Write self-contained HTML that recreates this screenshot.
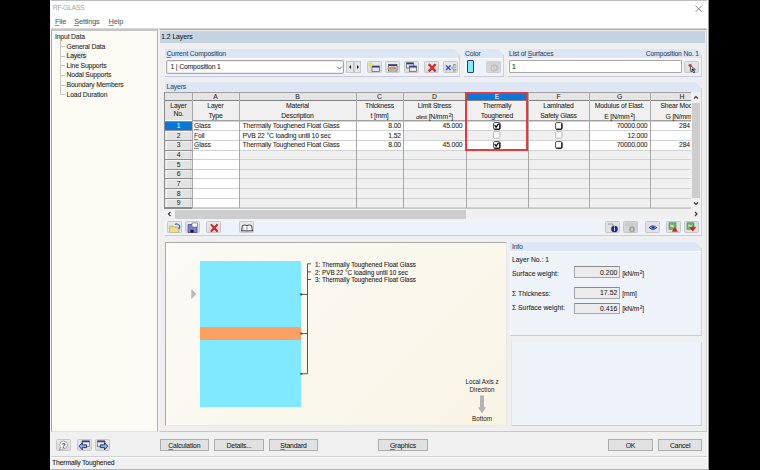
<!DOCTYPE html>
<html><head><meta charset="utf-8"><style>
html,body{margin:0;padding:0}
body{width:760px;height:470px;background:#000;position:relative;overflow:hidden;font-family:"Liberation Sans",sans-serif}
.a{position:absolute}
.t{position:absolute;white-space:nowrap;line-height:1;-webkit-text-stroke:0.07px currentColor}
u{text-decoration:underline;text-underline-offset:0.6px;text-decoration-thickness:0.6px;text-decoration-color:rgba(40,40,40,0.55)}
</style></head><body>
<div class="a" style="left:50px;top:0px;width:659px;height:470px;background:#f0f0f0;"></div>
<div class="a" style="left:50px;top:0px;width:659px;height:1px;background:#bdbdbd;"></div>
<div class="a" style="left:50px;top:0px;width:1px;height:470px;background:#f4f4f4;"></div>
<div class="a" style="left:708px;top:0px;width:1px;height:470px;background:#9a9a9a;"></div>
<div class="a" style="left:51px;top:1px;width:657px;height:28px;background:#ffffff;"></div>
<div class="t" style="left:52.8px;top:5.00px;font-size:7.1px;color:#a4a4a4;letter-spacing:-0.500px;-webkit-text-stroke:0;">RF-GLASS</div>
<svg class="a" style="left:695px;top:5px" width="8" height="8"><path d="M0.5 0.5L7 7M7 0.5L0.5 7" stroke="#6a6a6a" stroke-width="0.8"/></svg>
<div class="t" style="left:55px;top:18.00px;font-size:7.4px;color:#505050;letter-spacing:-0.170px;-webkit-text-stroke:0.03px currentColor;"><u>F</u>ile</div>
<div class="t" style="left:74.3px;top:18.00px;font-size:7.4px;color:#505050;letter-spacing:-0.170px;-webkit-text-stroke:0.03px currentColor;"><u>S</u>ettings</div>
<div class="t" style="left:108.6px;top:18.00px;font-size:7.4px;color:#505050;letter-spacing:-0.170px;-webkit-text-stroke:0.03px currentColor;"><u>H</u>elp</div>
<div class="a" style="left:51px;top:28px;width:657px;height:1px;background:#d9d9d9;"></div>
<div class="a" style="left:51px;top:29px;width:107px;height:403px;background:#fbfbf3;border-top:2px solid #c4c4c4;border-left:1px solid #a6a6a6;border-right:1px solid #b4b4b4;border-bottom:1px solid #e3e3e3;box-sizing:border-box;"></div>
<div class="t" style="left:55px;top:34.00px;font-size:6.8px;color:#1e1e1e;letter-spacing:-0.150px;">Input Data</div>
<div class="a" style="left:60px;top:41px;width:1px;height:53.5px;background:#c8c8c8;"></div>
<div class="a" style="left:60px;top:46px;width:5px;height:1px;background:#c8c8c8;"></div>
<div class="t" style="left:66.6px;top:44.00px;font-size:6.8px;color:#1e1e1e;letter-spacing:-0.150px;">General Data</div>
<div class="a" style="left:60px;top:56px;width:5px;height:1px;background:#c8c8c8;"></div>
<div class="a" style="left:65.5px;top:51.25px;width:21px;height:9px;background:#ececec;"></div>
<div class="t" style="left:66.6px;top:53.00px;font-size:6.8px;color:#1e1e1e;letter-spacing:-0.150px;">Layers</div>
<div class="a" style="left:60px;top:65px;width:5px;height:1px;background:#c8c8c8;"></div>
<div class="t" style="left:66.6px;top:63.00px;font-size:6.8px;color:#1e1e1e;letter-spacing:-0.150px;">Line Supports</div>
<div class="a" style="left:60px;top:75px;width:5px;height:1px;background:#c8c8c8;"></div>
<div class="t" style="left:66.6px;top:72.00px;font-size:6.8px;color:#1e1e1e;letter-spacing:-0.150px;">Nodal Supports</div>
<div class="a" style="left:60px;top:85px;width:5px;height:1px;background:#c8c8c8;"></div>
<div class="t" style="left:66.6px;top:82.00px;font-size:6.8px;color:#1e1e1e;letter-spacing:-0.150px;">Boundary Members</div>
<div class="a" style="left:60px;top:94px;width:5px;height:1px;background:#c8c8c8;"></div>
<div class="t" style="left:66.6px;top:92.00px;font-size:6.8px;color:#1e1e1e;letter-spacing:-0.150px;">Load Duration</div>
<div class="a" style="left:159px;top:29px;width:548px;height:403px;background:#efefef;border-top:1px solid #a8a8a8;border-left:1px solid #f4f4f4;border-right:1px solid #d4d4d4;border-bottom:1px solid #c8c8c8;box-sizing:border-box;"></div>
<div class="a" style="left:707px;top:0px;width:1px;height:470px;background:#fafafa;"></div>
<div class="a" style="left:160px;top:30.5px;width:545px;height:12px;background:#c5d3e1;"></div>
<div class="t" style="left:161.3px;top:34.00px;font-size:6.9px;color:#1a1a2a;letter-spacing:-0.100px;">1.2 Layers</div>
<svg class="a" style="left:165px;top:48.6px" width="295" height="9.2"><path d="M0 0H289L295 6V9.2H0Z" fill="#dce6f4"/></svg>
<div class="a" style="left:165px;top:57.8px;width:295px;height:18.8px;background:#eef2f9;"></div>
<div class="a" style="left:165px;top:57.8px;width:294px;height:1px;background:#f8faff;"></div>
<div class="a" style="left:165px;top:57.8px;width:1px;height:18.8px;background:#f6f8fc;"></div>
<div class="a" style="left:459px;top:54.6px;width:1px;height:22px;background:#cfcff5;"></div>
<div class="a" style="left:165px;top:75.6px;width:295px;height:1.2px;background:#c8c8f2;"></div>
<div class="t" style="left:166.5px;top:51.00px;font-size:6.8px;color:#2f4a6d;letter-spacing:-0.150px;"><u>C</u>urrent Composition</div>
<svg class="a" style="left:463.5px;top:48.6px" width="40.5" height="9.2"><path d="M0 0H34.5L40.5 6V9.2H0Z" fill="#dce6f4"/></svg>
<div class="a" style="left:463.5px;top:57.8px;width:40.5px;height:18.8px;background:#eef2f9;"></div>
<div class="a" style="left:463.5px;top:57.8px;width:39.5px;height:1px;background:#f8faff;"></div>
<div class="a" style="left:463.5px;top:57.8px;width:1px;height:18.8px;background:#f6f8fc;"></div>
<div class="a" style="left:503.0px;top:54.6px;width:1px;height:22px;background:#cfcff5;"></div>
<div class="a" style="left:463.5px;top:75.6px;width:40.5px;height:1.2px;background:#c8c8f2;"></div>
<div class="t" style="left:465.0px;top:51.00px;font-size:6.8px;color:#2f4a6d;letter-spacing:-0.150px;">Color</div>
<svg class="a" style="left:507.5px;top:48.6px" width="194" height="9.2"><path d="M0 0H188L194 6V9.2H0Z" fill="#dce6f4"/></svg>
<div class="a" style="left:507.5px;top:57.8px;width:194px;height:18.8px;background:#eef2f9;"></div>
<div class="a" style="left:507.5px;top:57.8px;width:193px;height:1px;background:#f8faff;"></div>
<div class="a" style="left:507.5px;top:57.8px;width:1px;height:18.8px;background:#f6f8fc;"></div>
<div class="a" style="left:700.5px;top:54.6px;width:1px;height:22px;background:#cfcff5;"></div>
<div class="a" style="left:507.5px;top:75.6px;width:194px;height:1.2px;background:#c8c8f2;"></div>
<div class="t" style="left:509.0px;top:51.00px;font-size:6.8px;color:#2f4a6d;letter-spacing:-0.150px;">List of <u>S</u>urfaces</div>
<div class="t" style="right:61px;top:51.00px;font-size:6.8px;color:#2f4a6d;letter-spacing:-0.150px;">Composition No. 1</div>
<div class="a" style="left:166px;top:60px;width:178.2px;height:13.5px;background:#fff;border:1px solid #a8a8a8;border-radius:2px;box-sizing:border-box;box-shadow:inset 0 0 0 0.5px #d8d8d8;"></div>
<div class="t" style="left:170.5px;top:64.00px;font-size:6.8px;color:#1e1e1e;letter-spacing:-0.150px;">1 | Composition 1</div>
<svg class="a" style="left:335.5px;top:64.5px" width="8" height="6"><path d="M0.9 1.6L3.4 4.1L5.9 1.6" stroke="#555" stroke-width="0.9" fill="none"/></svg>
<div class="a" style="left:346px;top:61px;width:7.5px;height:12px;background:#e6e6e6;border:1px solid #c8c8c8;box-sizing:border-box;"></div>
<div class="a" style="left:353.5px;top:61px;width:7.5px;height:12px;background:#e6e6e6;border:1px solid #c8c8c8;box-sizing:border-box;"></div>
<svg class="a" style="left:346px;top:61px" width="15" height="12"><path d="M5 4L3 6L5 8Z" fill="#202020"/><path d="M11 4L13 6L11 8Z" fill="#202020"/></svg>
<div class="a" style="left:367.2px;top:61px;width:15px;height:12px;background:linear-gradient(#e9e9e9,#dadada);border:1px solid #c8c8c8;border-radius:1.5px;box-sizing:border-box;"><svg width="15" height="12" style="position:absolute;left:0;top:0"><rect x="4" y="4" width="7.5" height="5.5" fill="#e6e6e6" stroke="#5a5a5a" stroke-width="0.7"/><rect x="4" y="4" width="7.5" height="1.5" fill="#2a3a90"/><circle cx="2.6" cy="2.8" r="2" fill="#ecec50" stroke="#c8c030" stroke-width="0.4"/></svg></div>
<div class="a" style="left:385.3px;top:61px;width:15px;height:12px;background:linear-gradient(#e9e9e9,#dadada);border:1px solid #c8c8c8;border-radius:1.5px;box-sizing:border-box;"><svg width="15" height="12" style="position:absolute;left:0;top:0"><rect x="2.5" y="2.5" width="8.5" height="6.5" fill="#e6e6e6" stroke="#5a5a5a" stroke-width="0.7"/><rect x="2.5" y="2.5" width="8.5" height="1.5" fill="#2a3a90"/><path d="M1 6.2Q4 3.8 8 4.6L11.5 5.5L11 7.5L7 7.8L4 8Z" fill="#c89a78"/><path d="M10.5 5L12.5 4.5V6.5Z" fill="#80c0e0"/></svg></div>
<div class="a" style="left:404px;top:61px;width:15px;height:12px;background:linear-gradient(#e9e9e9,#dadada);border:1px solid #c8c8c8;border-radius:1.5px;box-sizing:border-box;"><svg width="15" height="12" style="position:absolute;left:0;top:0"><rect x="1.5" y="0.8" width="7" height="5.2" fill="#e6e6e6" stroke="#5a5a5a" stroke-width="0.7"/><rect x="1.5" y="0.8" width="7" height="1.5" fill="#2a3a90"/><rect x="4.5" y="4" width="7" height="5.5" fill="#e6e6e6" stroke="#5a5a5a" stroke-width="0.7"/><rect x="4.5" y="4" width="7" height="1.5" fill="#2a3a90"/></svg></div>
<div class="a" style="left:424.4px;top:61px;width:15px;height:12px;background:linear-gradient(#e9e9e9,#dadada);border:1px solid #c8c8c8;border-radius:1.5px;box-sizing:border-box;"><svg width="15" height="12" style="position:absolute;left:0;top:0"><path d="M3.8 2.2L10.5 9.3M10.5 2.2L3.8 9.3" stroke="#b81818" stroke-width="2.3"/><path d="M3.8 2.2L10.5 9.3M10.5 2.2L3.8 9.3" stroke="#e83030" stroke-width="1.2"/></svg></div>
<div class="a" style="left:442.6px;top:61px;width:15px;height:12px;background:linear-gradient(#e9e9e9,#dadada);border:1px solid #c8c8c8;border-radius:1.5px;box-sizing:border-box;"><svg width="15" height="12" style="position:absolute;left:0;top:0"><path d="M2 3.5L6.5 8M6.5 3.5L2 8" stroke="#3050d0" stroke-width="1.4"/><path d="M7.5 5.8L10.5 2.5M7.5 5.8L10.5 9M8 5.8H12M9 4H12.5M9 7.5H12.5M9 2.5H12M9 9H12" stroke="#808080" stroke-width="0.6"/></svg></div>
<div class="a" style="left:466.8px;top:60.4px;width:7px;height:12.2px;background:#80eaff;border:1px solid #304050;border-radius:1px;box-sizing:border-box;"></div>
<div class="a" style="left:486.1px;top:60.6px;width:15.2px;height:12.4px;background:#d4d4d4;border:1px solid #d0d0d0;border-radius:1.5px;box-sizing:border-box;"><svg width="15" height="12" style="position:absolute;left:0;top:0"><circle cx="7" cy="6" r="3.2" fill="none" stroke="#b4b4b4" stroke-width="0.8"/><circle cx="8.5" cy="5.5" r="2.2" fill="none" stroke="#b4b4b4" stroke-width="0.6"/></svg></div>
<div class="a" style="left:509px;top:60.4px;width:173px;height:12.6px;background:#fff;border:1px solid #a8a8a8;border-radius:1px;box-sizing:border-box;"></div>
<div class="t" style="left:512px;top:64.00px;font-size:6.8px;color:#1e1e1e;letter-spacing:-0.150px;">1</div>
<div class="a" style="left:684px;top:60.7px;width:15px;height:12.4px;background:linear-gradient(#e9e9e9,#dadada);border:1px solid #c8c8c8;border-radius:1.5px;box-sizing:border-box;"><svg width="15" height="12" style="position:absolute;left:0;top:0"><path d="M5.2 3.2L10.3 7.6L8.4 8L9.8 10.3L8.7 10.9L7.4 8.6L6 9.9Z" fill="#fafafa" stroke="#101010" stroke-width="0.7"/><circle cx="7.6" cy="7.6" r="1" fill="#101010"/><path d="M3.5 1.2L5 2.6L6.8 1.4L6.2 3.3L7.4 4.2L5.4 4.1L4.6 5.6L4.2 3.8L2.6 3.2L4.1 2.6Z" fill="#e02828"/></svg></div>
<svg class="a" style="left:165px;top:81.8px" width="536.5" height="10.5"><path d="M0 0H530.5L536.5 6V10.5H0Z" fill="#dce6f4"/></svg>
<div class="a" style="left:165px;top:92.3px;width:536.5px;height:143.5px;background:#eef2f9;"></div>
<div class="a" style="left:165px;top:92.3px;width:535.5px;height:1px;background:#f8faff;"></div>
<div class="a" style="left:165px;top:92.3px;width:1px;height:143.5px;background:#f6f8fc;"></div>
<div class="a" style="left:700.5px;top:87.8px;width:1px;height:148px;background:#cfcff5;"></div>
<div class="a" style="left:165px;top:234.8px;width:536.5px;height:1.2px;background:#c8c8f2;"></div>
<div class="t" style="left:166.5px;top:84.00px;font-size:6.8px;color:#2f4a6d;letter-spacing:-0.150px;">Layers</div>
<div class="a" style="left:165px;top:92.4px;width:526px;height:115.5px;background:#ffffff;"></div>
<div class="a" style="left:165px;top:92.4px;width:526px;height:8px;background:#e4e4e4;"></div>
<div class="a" style="left:165px;top:100.4px;width:526px;height:20.1px;background:#f0f0f0;"></div>
<div class="a" style="left:165px;top:92.4px;width:27px;height:28.1px;background:#e4e4e4;"></div>
<div class="a" style="left:192px;top:120.6px;width:47px;height:9.65px;background:#ffffff;"></div>
<div class="a" style="left:239px;top:120.6px;width:117px;height:9.65px;background:#ffffff;"></div>
<div class="a" style="left:356px;top:120.6px;width:47px;height:9.65px;background:#ffffff;"></div>
<div class="a" style="left:403px;top:120.6px;width:63px;height:9.65px;background:#ffffff;"></div>
<div class="a" style="left:466px;top:120.6px;width:62px;height:9.65px;background:#ffffff;"></div>
<div class="a" style="left:528px;top:120.6px;width:61px;height:9.65px;background:#ffffff;"></div>
<div class="a" style="left:589px;top:120.6px;width:61px;height:9.65px;background:#ffffff;"></div>
<div class="a" style="left:650px;top:120.6px;width:41px;height:9.65px;background:#ffffff;"></div>
<div class="a" style="left:165px;top:120.6px;width:27px;height:9.65px;background:#0a78d7;"></div>
<div class="t" style="left:78.5px;width:200px;text-align:center;top:123.00px;font-size:6.8px;color:#ffffff;letter-spacing:-0.150px;-webkit-text-stroke:0;">1</div>
<div class="a" style="left:192px;top:130.25px;width:47px;height:9.65px;background:#ffffff;"></div>
<div class="a" style="left:239px;top:130.25px;width:117px;height:9.65px;background:#ffffff;"></div>
<div class="a" style="left:356px;top:130.25px;width:47px;height:9.65px;background:#ffffff;"></div>
<div class="a" style="left:403px;top:130.25px;width:63px;height:9.65px;background:#f0f0f0;"></div>
<div class="a" style="left:466px;top:130.25px;width:62px;height:9.65px;background:#f0f0f0;"></div>
<div class="a" style="left:528px;top:130.25px;width:61px;height:9.65px;background:#f0f0f0;"></div>
<div class="a" style="left:589px;top:130.25px;width:61px;height:9.65px;background:#ffffff;"></div>
<div class="a" style="left:650px;top:130.25px;width:41px;height:9.65px;background:#ffffff;"></div>
<div class="a" style="left:165px;top:130.25px;width:27px;height:9.65px;background:#e3e3e3;"></div>
<div class="a" style="left:166px;top:131px;width:25px;height:1px;background:#f4f4f4;"></div>
<div class="a" style="left:166px;top:131px;width:1px;height:8.65px;background:#f4f4f4;"></div>
<div class="a" style="left:190px;top:131px;width:1px;height:8.65px;background:#d4d4d4;"></div>
<div class="t" style="left:78.5px;width:200px;text-align:center;top:133.00px;font-size:6.8px;color:#1e1e1e;letter-spacing:-0.150px;-webkit-text-stroke:0.03px currentColor;">2</div>
<div class="a" style="left:192px;top:139.9px;width:47px;height:9.65px;background:#ffffff;"></div>
<div class="a" style="left:239px;top:139.9px;width:117px;height:9.65px;background:#ffffff;"></div>
<div class="a" style="left:356px;top:139.9px;width:47px;height:9.65px;background:#ffffff;"></div>
<div class="a" style="left:403px;top:139.9px;width:63px;height:9.65px;background:#ffffff;"></div>
<div class="a" style="left:466px;top:139.9px;width:62px;height:9.65px;background:#ffffff;"></div>
<div class="a" style="left:528px;top:139.9px;width:61px;height:9.65px;background:#ffffff;"></div>
<div class="a" style="left:589px;top:139.9px;width:61px;height:9.65px;background:#ffffff;"></div>
<div class="a" style="left:650px;top:139.9px;width:41px;height:9.65px;background:#ffffff;"></div>
<div class="a" style="left:165px;top:139.9px;width:27px;height:9.65px;background:#e3e3e3;"></div>
<div class="a" style="left:166px;top:141px;width:25px;height:1px;background:#f4f4f4;"></div>
<div class="a" style="left:166px;top:141px;width:1px;height:8.65px;background:#f4f4f4;"></div>
<div class="a" style="left:190px;top:141px;width:1px;height:8.65px;background:#d4d4d4;"></div>
<div class="t" style="left:78.5px;width:200px;text-align:center;top:142.00px;font-size:6.8px;color:#1e1e1e;letter-spacing:-0.150px;-webkit-text-stroke:0.03px currentColor;">3</div>
<div class="a" style="left:192px;top:149.55px;width:47px;height:9.65px;background:#ffffff;"></div>
<div class="a" style="left:239px;top:149.55px;width:117px;height:9.65px;background:#f0f0f0;"></div>
<div class="a" style="left:356px;top:149.55px;width:47px;height:9.65px;background:#f0f0f0;"></div>
<div class="a" style="left:403px;top:149.55px;width:63px;height:9.65px;background:#f0f0f0;"></div>
<div class="a" style="left:466px;top:149.55px;width:62px;height:9.65px;background:#f0f0f0;"></div>
<div class="a" style="left:528px;top:149.55px;width:61px;height:9.65px;background:#f0f0f0;"></div>
<div class="a" style="left:589px;top:149.55px;width:61px;height:9.65px;background:#f0f0f0;"></div>
<div class="a" style="left:650px;top:149.55px;width:41px;height:9.65px;background:#f0f0f0;"></div>
<div class="a" style="left:165px;top:149.55px;width:27px;height:9.65px;background:#e3e3e3;"></div>
<div class="a" style="left:166px;top:151px;width:25px;height:1px;background:#f4f4f4;"></div>
<div class="a" style="left:166px;top:151px;width:1px;height:8.65px;background:#f4f4f4;"></div>
<div class="a" style="left:190px;top:151px;width:1px;height:8.65px;background:#d4d4d4;"></div>
<div class="t" style="left:78.5px;width:200px;text-align:center;top:152.00px;font-size:6.8px;color:#1e1e1e;letter-spacing:-0.150px;-webkit-text-stroke:0.03px currentColor;">4</div>
<div class="a" style="left:192px;top:159.2px;width:47px;height:9.65px;background:#ffffff;"></div>
<div class="a" style="left:239px;top:159.2px;width:117px;height:9.65px;background:#f0f0f0;"></div>
<div class="a" style="left:356px;top:159.2px;width:47px;height:9.65px;background:#f0f0f0;"></div>
<div class="a" style="left:403px;top:159.2px;width:63px;height:9.65px;background:#f0f0f0;"></div>
<div class="a" style="left:466px;top:159.2px;width:62px;height:9.65px;background:#f0f0f0;"></div>
<div class="a" style="left:528px;top:159.2px;width:61px;height:9.65px;background:#f0f0f0;"></div>
<div class="a" style="left:589px;top:159.2px;width:61px;height:9.65px;background:#f0f0f0;"></div>
<div class="a" style="left:650px;top:159.2px;width:41px;height:9.65px;background:#f0f0f0;"></div>
<div class="a" style="left:165px;top:159.2px;width:27px;height:9.65px;background:#e3e3e3;"></div>
<div class="a" style="left:166px;top:160px;width:25px;height:1px;background:#f4f4f4;"></div>
<div class="a" style="left:166px;top:160px;width:1px;height:8.65px;background:#f4f4f4;"></div>
<div class="a" style="left:190px;top:160px;width:1px;height:8.65px;background:#d4d4d4;"></div>
<div class="t" style="left:78.5px;width:200px;text-align:center;top:162.00px;font-size:6.8px;color:#1e1e1e;letter-spacing:-0.150px;-webkit-text-stroke:0.03px currentColor;">5</div>
<div class="a" style="left:192px;top:168.85px;width:47px;height:9.65px;background:#ffffff;"></div>
<div class="a" style="left:239px;top:168.85px;width:117px;height:9.65px;background:#f0f0f0;"></div>
<div class="a" style="left:356px;top:168.85px;width:47px;height:9.65px;background:#f0f0f0;"></div>
<div class="a" style="left:403px;top:168.85px;width:63px;height:9.65px;background:#f0f0f0;"></div>
<div class="a" style="left:466px;top:168.85px;width:62px;height:9.65px;background:#f0f0f0;"></div>
<div class="a" style="left:528px;top:168.85px;width:61px;height:9.65px;background:#f0f0f0;"></div>
<div class="a" style="left:589px;top:168.85px;width:61px;height:9.65px;background:#f0f0f0;"></div>
<div class="a" style="left:650px;top:168.85px;width:41px;height:9.65px;background:#f0f0f0;"></div>
<div class="a" style="left:165px;top:168.85px;width:27px;height:9.65px;background:#e3e3e3;"></div>
<div class="a" style="left:166px;top:170px;width:25px;height:1px;background:#f4f4f4;"></div>
<div class="a" style="left:166px;top:170px;width:1px;height:8.65px;background:#f4f4f4;"></div>
<div class="a" style="left:190px;top:170px;width:1px;height:8.65px;background:#d4d4d4;"></div>
<div class="t" style="left:78.5px;width:200px;text-align:center;top:171.00px;font-size:6.8px;color:#1e1e1e;letter-spacing:-0.150px;-webkit-text-stroke:0.03px currentColor;">6</div>
<div class="a" style="left:192px;top:178.5px;width:47px;height:9.65px;background:#ffffff;"></div>
<div class="a" style="left:239px;top:178.5px;width:117px;height:9.65px;background:#f0f0f0;"></div>
<div class="a" style="left:356px;top:178.5px;width:47px;height:9.65px;background:#f0f0f0;"></div>
<div class="a" style="left:403px;top:178.5px;width:63px;height:9.65px;background:#f0f0f0;"></div>
<div class="a" style="left:466px;top:178.5px;width:62px;height:9.65px;background:#f0f0f0;"></div>
<div class="a" style="left:528px;top:178.5px;width:61px;height:9.65px;background:#f0f0f0;"></div>
<div class="a" style="left:589px;top:178.5px;width:61px;height:9.65px;background:#f0f0f0;"></div>
<div class="a" style="left:650px;top:178.5px;width:41px;height:9.65px;background:#f0f0f0;"></div>
<div class="a" style="left:165px;top:178.5px;width:27px;height:9.65px;background:#e3e3e3;"></div>
<div class="a" style="left:166px;top:179px;width:25px;height:1px;background:#f4f4f4;"></div>
<div class="a" style="left:166px;top:179px;width:1px;height:8.65px;background:#f4f4f4;"></div>
<div class="a" style="left:190px;top:179px;width:1px;height:8.65px;background:#d4d4d4;"></div>
<div class="t" style="left:78.5px;width:200px;text-align:center;top:181.00px;font-size:6.8px;color:#1e1e1e;letter-spacing:-0.150px;-webkit-text-stroke:0.03px currentColor;">7</div>
<div class="a" style="left:192px;top:188.14999999999998px;width:47px;height:9.65px;background:#ffffff;"></div>
<div class="a" style="left:239px;top:188.14999999999998px;width:117px;height:9.65px;background:#f0f0f0;"></div>
<div class="a" style="left:356px;top:188.14999999999998px;width:47px;height:9.65px;background:#f0f0f0;"></div>
<div class="a" style="left:403px;top:188.14999999999998px;width:63px;height:9.65px;background:#f0f0f0;"></div>
<div class="a" style="left:466px;top:188.14999999999998px;width:62px;height:9.65px;background:#f0f0f0;"></div>
<div class="a" style="left:528px;top:188.14999999999998px;width:61px;height:9.65px;background:#f0f0f0;"></div>
<div class="a" style="left:589px;top:188.14999999999998px;width:61px;height:9.65px;background:#f0f0f0;"></div>
<div class="a" style="left:650px;top:188.14999999999998px;width:41px;height:9.65px;background:#f0f0f0;"></div>
<div class="a" style="left:165px;top:188.14999999999998px;width:27px;height:9.65px;background:#e3e3e3;"></div>
<div class="a" style="left:166px;top:189px;width:25px;height:1px;background:#f4f4f4;"></div>
<div class="a" style="left:166px;top:189px;width:1px;height:8.65px;background:#f4f4f4;"></div>
<div class="a" style="left:190px;top:189px;width:1px;height:8.65px;background:#d4d4d4;"></div>
<div class="t" style="left:78.5px;width:200px;text-align:center;top:191.00px;font-size:6.8px;color:#1e1e1e;letter-spacing:-0.150px;-webkit-text-stroke:0.03px currentColor;">8</div>
<div class="a" style="left:192px;top:197.8px;width:47px;height:9.65px;background:#ffffff;"></div>
<div class="a" style="left:239px;top:197.8px;width:117px;height:9.65px;background:#f0f0f0;"></div>
<div class="a" style="left:356px;top:197.8px;width:47px;height:9.65px;background:#f0f0f0;"></div>
<div class="a" style="left:403px;top:197.8px;width:63px;height:9.65px;background:#f0f0f0;"></div>
<div class="a" style="left:466px;top:197.8px;width:62px;height:9.65px;background:#f0f0f0;"></div>
<div class="a" style="left:528px;top:197.8px;width:61px;height:9.65px;background:#f0f0f0;"></div>
<div class="a" style="left:589px;top:197.8px;width:61px;height:9.65px;background:#f0f0f0;"></div>
<div class="a" style="left:650px;top:197.8px;width:41px;height:9.65px;background:#f0f0f0;"></div>
<div class="a" style="left:165px;top:197.8px;width:27px;height:9.65px;background:#e3e3e3;"></div>
<div class="a" style="left:166px;top:199px;width:25px;height:1px;background:#f4f4f4;"></div>
<div class="a" style="left:166px;top:199px;width:1px;height:8.65px;background:#f4f4f4;"></div>
<div class="a" style="left:190px;top:199px;width:1px;height:8.65px;background:#d4d4d4;"></div>
<div class="t" style="left:78.5px;width:200px;text-align:center;top:200.00px;font-size:6.8px;color:#1e1e1e;letter-spacing:-0.150px;-webkit-text-stroke:0.03px currentColor;">9</div>
<div class="a" style="left:192px;top:121px;width:499px;height:1px;background:#d2d2d2;"></div>
<div class="a" style="left:165px;top:121px;width:27px;height:1px;background:#8f8f8f;"></div>
<div class="a" style="left:192px;top:130px;width:499px;height:1px;background:#d2d2d2;"></div>
<div class="a" style="left:165px;top:130px;width:27px;height:1px;background:#8f8f8f;"></div>
<div class="a" style="left:192px;top:140px;width:499px;height:1px;background:#d2d2d2;"></div>
<div class="a" style="left:165px;top:140px;width:27px;height:1px;background:#8f8f8f;"></div>
<div class="a" style="left:192px;top:150px;width:499px;height:1px;background:#d2d2d2;"></div>
<div class="a" style="left:165px;top:150px;width:27px;height:1px;background:#8f8f8f;"></div>
<div class="a" style="left:192px;top:159px;width:499px;height:1px;background:#d2d2d2;"></div>
<div class="a" style="left:165px;top:159px;width:27px;height:1px;background:#8f8f8f;"></div>
<div class="a" style="left:192px;top:169px;width:499px;height:1px;background:#d2d2d2;"></div>
<div class="a" style="left:165px;top:169px;width:27px;height:1px;background:#8f8f8f;"></div>
<div class="a" style="left:192px;top:178px;width:499px;height:1px;background:#d2d2d2;"></div>
<div class="a" style="left:165px;top:178px;width:27px;height:1px;background:#8f8f8f;"></div>
<div class="a" style="left:192px;top:188px;width:499px;height:1px;background:#d2d2d2;"></div>
<div class="a" style="left:165px;top:188px;width:27px;height:1px;background:#8f8f8f;"></div>
<div class="a" style="left:192px;top:198px;width:499px;height:1px;background:#d2d2d2;"></div>
<div class="a" style="left:165px;top:198px;width:27px;height:1px;background:#8f8f8f;"></div>
<div class="a" style="left:192px;top:207px;width:499px;height:1px;background:#d2d2d2;"></div>
<div class="a" style="left:165px;top:207px;width:27px;height:1px;background:#8f8f8f;"></div>
<div class="a" style="left:165px;top:100.2px;width:526px;height:1px;background:#808080;"></div>
<div class="a" style="left:192px;top:120.2px;width:499px;height:1px;background:#a0a0a0;"></div>
<div class="a" style="left:192px;top:92.4px;width:1px;height:115.5px;background:#a8a8a8;"></div>
<div class="a" style="left:239px;top:92.4px;width:1px;height:115.5px;background:#a8a8a8;"></div>
<div class="a" style="left:356px;top:92.4px;width:1px;height:115.5px;background:#a8a8a8;"></div>
<div class="a" style="left:403px;top:92.4px;width:1px;height:115.5px;background:#a8a8a8;"></div>
<div class="a" style="left:466px;top:92.4px;width:1px;height:115.5px;background:#a8a8a8;"></div>
<div class="a" style="left:528px;top:92.4px;width:1px;height:115.5px;background:#a8a8a8;"></div>
<div class="a" style="left:589px;top:92.4px;width:1px;height:115.5px;background:#a8a8a8;"></div>
<div class="a" style="left:650px;top:92.4px;width:1px;height:115.5px;background:#a8a8a8;"></div>
<div class="a" style="left:164px;top:92.4px;width:1px;height:116.6px;background:#8c8c8c;"></div>
<div class="a" style="left:164px;top:208px;width:28px;height:1px;background:#8c8c8c;"></div>
<div class="a" style="left:192px;top:208px;width:499px;height:1px;background:#c8c8c8;"></div>
<div class="a" style="left:164.6px;top:92.4px;width:536px;height:0.8px;background:#a0a0a0;"></div>
<div class="t" style="left:115.5px;width:200px;text-align:center;top:94.00px;font-size:6.8px;color:#1e1e1e;letter-spacing:-0.150px;">A</div>
<div class="t" style="left:197.5px;width:200px;text-align:center;top:94.00px;font-size:6.8px;color:#1e1e1e;letter-spacing:-0.150px;">B</div>
<div class="t" style="left:279.5px;width:200px;text-align:center;top:94.00px;font-size:6.8px;color:#1e1e1e;letter-spacing:-0.150px;">C</div>
<div class="t" style="left:334.5px;width:200px;text-align:center;top:94.00px;font-size:6.8px;color:#1e1e1e;letter-spacing:-0.150px;">D</div>
<div class="a" style="left:467px;top:93.4px;width:61px;height:7px;background:#0a78d7;"></div>
<div class="t" style="left:397.0px;width:200px;text-align:center;top:94.00px;font-size:6.8px;color:#ffffff;letter-spacing:-0.150px;">E</div>
<div class="t" style="left:458.5px;width:200px;text-align:center;top:94.00px;font-size:6.8px;color:#1e1e1e;letter-spacing:-0.150px;">F</div>
<div class="t" style="left:519.5px;width:200px;text-align:center;top:94.00px;font-size:6.8px;color:#1e1e1e;letter-spacing:-0.150px;">G</div>
<div class="t" style="left:581.8px;width:200px;text-align:center;top:94.00px;font-size:6.8px;color:#1e1e1e;letter-spacing:-0.150px;">H</div>
<div class="t" style="left:78.5px;width:200px;text-align:center;top:103.00px;font-size:6.8px;color:#1e1e1e;letter-spacing:-0.150px;">Layer</div>
<div class="t" style="left:78.5px;width:200px;text-align:center;top:111.00px;font-size:6.8px;color:#1e1e1e;letter-spacing:-0.150px;">No.</div>
<div class="t" style="left:115.5px;width:200px;text-align:center;top:103.00px;font-size:6.8px;color:#1e1e1e;letter-spacing:-0.150px;">Layer</div>
<div class="t" style="left:115.5px;width:200px;text-align:center;top:113.00px;font-size:6.8px;color:#1e1e1e;letter-spacing:-0.150px;">Type</div>
<div class="t" style="left:197.5px;width:200px;text-align:center;top:103.00px;font-size:6.8px;color:#1e1e1e;letter-spacing:-0.150px;">Material</div>
<div class="t" style="left:197.5px;width:200px;text-align:center;top:113.00px;font-size:6.8px;color:#1e1e1e;letter-spacing:-0.150px;">Description</div>
<div class="t" style="left:279.5px;width:200px;text-align:center;top:103.00px;font-size:6.8px;color:#1e1e1e;letter-spacing:-0.150px;">Thickness</div>
<div class="t" style="left:279.5px;width:200px;text-align:center;top:113.00px;font-size:6.8px;color:#1e1e1e;letter-spacing:-0.150px;">t [mm]</div>
<div class="t" style="left:334.5px;width:200px;text-align:center;top:103.00px;font-size:6.8px;color:#1e1e1e;letter-spacing:-0.150px;">Limit Stress</div>
<div class="t" style="left:334.5px;width:200px;text-align:center;top:113.00px;font-size:6.8px;color:#1e1e1e;letter-spacing:-0.150px;"><span style="font-size:5.6px">σ</span><span style="font-size:4.6px;letter-spacing:-0.1px">limit</span> [N/mm<sup style="font-size:5px;vertical-align:2px;margin-left:0.8px">2</sup>]</div>
<div class="t" style="left:397.0px;width:200px;text-align:center;top:103.00px;font-size:6.8px;color:#1e1e1e;letter-spacing:-0.150px;">Thermally</div>
<div class="t" style="left:397.0px;width:200px;text-align:center;top:113.00px;font-size:6.8px;color:#1e1e1e;letter-spacing:-0.150px;">Toughened</div>
<div class="t" style="left:458.5px;width:200px;text-align:center;top:103.00px;font-size:6.8px;color:#1e1e1e;letter-spacing:-0.150px;">Laminated</div>
<div class="t" style="left:458.5px;width:200px;text-align:center;top:113.00px;font-size:6.8px;color:#1e1e1e;letter-spacing:-0.150px;">Safety Glass</div>
<div class="t" style="left:519.5px;width:200px;text-align:center;top:103.00px;font-size:6.8px;color:#1e1e1e;letter-spacing:-0.150px;">Modulus of Elast.</div>
<div class="t" style="left:519.5px;width:200px;text-align:center;top:113.00px;font-size:6.8px;color:#1e1e1e;letter-spacing:-0.150px;">E [N/mm<sup style="font-size:5px;vertical-align:2px;margin-left:0.8px">2</sup>]</div>
<div class="a" style="left:0;top:0;width:691px;height:470px;overflow:hidden">
<div class="t" style="left:660.4px;top:103.00px;font-size:6.8px;color:#1e1e1e;letter-spacing:-0.150px;">Shear Modulus</div>
<div class="t" style="left:665.5px;top:113.00px;font-size:6.8px;color:#1e1e1e;letter-spacing:-0.150px;">G [N/mm<sup style="font-size:5px;vertical-align:2px;margin-left:0.8px">2</sup>]</div>
</div>
<div class="t" style="left:194px;top:123.00px;font-size:6.8px;color:#1e1e1e;letter-spacing:-0.150px;"><u>G</u>lass</div>
<div class="t" style="left:194px;top:133.00px;font-size:6.8px;color:#1e1e1e;letter-spacing:-0.150px;"><u>F</u>oil</div>
<div class="t" style="left:194px;top:142.00px;font-size:6.8px;color:#1e1e1e;letter-spacing:-0.150px;"><u>G</u>lass</div>
<div class="t" style="left:242.6px;top:123.00px;font-size:6.8px;color:#1e1e1e;letter-spacing:-0.150px;">Thermally Toughened Float Glass</div>
<div class="t" style="left:242.6px;top:133.00px;font-size:6.8px;color:#1e1e1e;letter-spacing:-0.150px;">PVB 22 °C loading until 10 sec</div>
<div class="t" style="left:242.6px;top:142.00px;font-size:6.8px;color:#1e1e1e;letter-spacing:-0.150px;">Thermally Toughened Float Glass</div>
<div class="t" style="right:359px;top:123.00px;font-size:6.8px;color:#1e1e1e;letter-spacing:-0.150px;">8.00</div>
<div class="t" style="right:359px;top:133.00px;font-size:6.8px;color:#1e1e1e;letter-spacing:-0.150px;">1.52</div>
<div class="t" style="right:359px;top:142.00px;font-size:6.8px;color:#1e1e1e;letter-spacing:-0.150px;">8.00</div>
<div class="t" style="right:297.5px;top:123.00px;font-size:6.8px;color:#1e1e1e;letter-spacing:-0.150px;">45.000</div>
<div class="t" style="right:297.5px;top:142.00px;font-size:6.8px;color:#1e1e1e;letter-spacing:-0.150px;">45.000</div>
<div class="t" style="right:112.5px;top:123.00px;font-size:6.8px;color:#1e1e1e;letter-spacing:-0.150px;">70000.000</div>
<div class="t" style="right:112.5px;top:133.00px;font-size:6.8px;color:#1e1e1e;letter-spacing:-0.150px;">12.000</div>
<div class="t" style="right:112.5px;top:142.00px;font-size:6.8px;color:#1e1e1e;letter-spacing:-0.150px;">70000.000</div>
<div class="t" style="left:689px;top:123.00px;font-size:6.8px;color:#1e1e1e;letter-spacing:-0.150px;left:679px;">284</div>
<div class="t" style="left:689px;top:142.00px;font-size:6.8px;color:#1e1e1e;letter-spacing:-0.150px;left:679px;">284</div>
<svg class="a" style="left:493.1px;top:121.6px" width="8" height="8"><rect x="0.6" y="0.6" width="6.3" height="6.6" rx="1.1" fill="#fff" stroke="#383838" stroke-width="0.9"/><path d="M6.9 1.4V6.6Q6.9 7.2 6.3 7.2H1.3" stroke="#000" stroke-width="1.1" fill="none"/><path d="M1.7 3.2L3.1 5.2L5.6 1.6" stroke="#000" stroke-width="1.2" fill="none"/></svg>
<svg class="a" style="left:555.0px;top:121.6px" width="8" height="8"><rect x="0.6" y="0.6" width="6.3" height="6.6" rx="1.1" fill="#fff" stroke="#383838" stroke-width="0.9"/><path d="M6.9 1.4V6.6Q6.9 7.2 6.3 7.2H1.3" stroke="#000" stroke-width="1.1" fill="none"/></svg>
<svg class="a" style="left:493.1px;top:131.25px" width="8" height="8"><rect x="0.6" y="0.6" width="6.3" height="6.6" rx="1" fill="#fafafa" stroke="#b4b4b4" stroke-width="0.9"/></svg>
<svg class="a" style="left:555.0px;top:131.25px" width="8" height="8"><rect x="0.6" y="0.6" width="6.3" height="6.6" rx="1" fill="#fafafa" stroke="#b4b4b4" stroke-width="0.9"/></svg>
<svg class="a" style="left:493.1px;top:140.9px" width="8" height="8"><rect x="0.6" y="0.6" width="6.3" height="6.6" rx="1.1" fill="#fff" stroke="#383838" stroke-width="0.9"/><path d="M6.9 1.4V6.6Q6.9 7.2 6.3 7.2H1.3" stroke="#000" stroke-width="1.1" fill="none"/><path d="M1.7 3.2L3.1 5.2L5.6 1.6" stroke="#000" stroke-width="1.2" fill="none"/></svg>
<svg class="a" style="left:555.0px;top:140.9px" width="8" height="8"><rect x="0.6" y="0.6" width="6.3" height="6.6" rx="1.1" fill="#fff" stroke="#383838" stroke-width="0.9"/><path d="M6.9 1.4V6.6Q6.9 7.2 6.3 7.2H1.3" stroke="#000" stroke-width="1.1" fill="none"/></svg>
<div class="a" style="left:465.2px;top:92.4px;width:62.8px;height:58.6px;border:2px solid #e8383c;box-sizing:border-box;"></div>
<div class="a" style="left:691px;top:92.4px;width:9.5px;height:115.5px;background:#f0f0f0;"></div>
<div class="a" style="left:692px;top:102.5px;width:7.5px;height:95px;background:#cdcdcd;"></div>
<svg class="a" style="left:691px;top:93px" width="10" height="9"><path d="M3 5.5L5 3.5L7 5.5" stroke="#333" stroke-width="1.1" fill="none"/></svg>
<svg class="a" style="left:691px;top:199px" width="10" height="9"><path d="M3 3.5L5 5.5L7 3.5" stroke="#333" stroke-width="1.1" fill="none"/></svg>
<div class="a" style="left:165px;top:209px;width:536px;height:10px;background:#f0f0f0;"></div>
<div class="a" style="left:175px;top:209.8px;width:290.5px;height:9px;background:#cdcdcd;"></div>
<svg class="a" style="left:165px;top:209px" width="10" height="10"><path d="M5.5 3L3.5 5L5.5 7" stroke="#333" stroke-width="1.1" fill="none"/></svg>
<svg class="a" style="left:691px;top:209px" width="10" height="10"><path d="M4 3L6 5L4 7" stroke="#333" stroke-width="1.1" fill="none"/></svg>
<div class="a" style="left:166.9px;top:221.2px;width:15px;height:12.2px;background:linear-gradient(#e9e9e9,#dadada);border:1px solid #c8c8c8;border-radius:1.5px;box-sizing:border-box;"><svg width="15" height="12" style="position:absolute;left:0;top:0"><path d="M1.8 4H5L6 5H10.5V10H1.8Z" fill="#e4d474" stroke="#a89848" stroke-width="0.5"/><path d="M2.3 6.5H11L10 10H2Z" fill="#f0e080"/><path d="M7 2.5A2.8 2.8 0 1 1 10.5 7" stroke="#3a68c8" stroke-width="1.1" fill="none"/></svg></div>
<div class="a" style="left:185.2px;top:221.2px;width:15px;height:12.2px;background:linear-gradient(#e9e9e9,#dadada);border:1px solid #c8c8c8;border-radius:1.5px;box-sizing:border-box;"><svg width="15" height="12" style="position:absolute;left:0;top:0"><path d="M2 2.5H9L11 4.5V10.5H2Z" fill="#8080d8" stroke="#303078" stroke-width="0.6"/><rect x="6" y="1" width="5.5" height="4" fill="#fafafa" stroke="#404040" stroke-width="0.5"/><rect x="4.5" y="7.8" width="3" height="2.7" fill="#101020"/></svg></div>
<div class="a" style="left:205.7px;top:221.2px;width:15px;height:12.2px;background:linear-gradient(#e9e9e9,#dadada);border:1px solid #c8c8c8;border-radius:1.5px;box-sizing:border-box;"><svg width="15" height="12" style="position:absolute;left:0;top:0"><path d="M4 2.3L10.5 9.5M10.5 2.3L4 9.5" stroke="#b81818" stroke-width="1.9"/><path d="M4 2.3L10.5 9.5M10.5 2.3L4 9.5" stroke="#e83030" stroke-width="0.9"/></svg></div>
<div class="a" style="left:238.6px;top:221.2px;width:15px;height:12.2px;background:linear-gradient(#e9e9e9,#dadada);border:1px solid #c8c8c8;border-radius:1.5px;box-sizing:border-box;"><svg width="15" height="12" style="position:absolute;left:0;top:0"><path d="M2.5 3.5Q5 2.5 7 3.5Q9 2.5 11.5 3.5L12.5 9Q10 8.3 7 9Q4 8.3 1.5 9Z" fill="#f4f4f4" stroke="#202040" stroke-width="0.8"/><path d="M7 3.5V9" stroke="#404040" stroke-width="0.5"/><path d="M3.2 4.5V8.3" stroke="#a0a0a0" stroke-width="0.6"/></svg></div>
<div class="a" style="left:604.5px;top:221px;width:15px;height:12.2px;background:#e1e1e1;border:1px solid #c8c8c8;border-radius:1.5px;box-sizing:border-box;"><svg width="15" height="12" style="position:absolute;left:0;top:0"><circle cx="8.5" cy="7" r="3.3" fill="#1a2a80"/><rect x="8" y="5.8" width="1" height="3" fill="#fff"/><rect x="8" y="4.3" width="1" height="1" fill="#fff"/><path d="M2 2H7V4" stroke="#505050" stroke-width="0.5" fill="none"/></svg></div>
<div class="a" style="left:623.2px;top:221px;width:15px;height:12.2px;background:#d6d6d6;border:1px solid #c8c8c8;border-radius:1.5px;box-sizing:border-box;"><svg width="15" height="12" style="position:absolute;left:0;top:0"><circle cx="8" cy="7.2" r="3" fill="#a0a0a0"/><rect x="7.5" y="6" width="1" height="3" fill="#fff"/><path d="M1 1H14V4H1Z" fill="#cacaca"/></svg></div>
<div class="a" style="left:644.5px;top:221px;width:15px;height:12.2px;background:#e1e1e1;border:1px solid #c8c8c8;border-radius:1.5px;box-sizing:border-box;"><svg width="15" height="12" style="position:absolute;left:0;top:0"><path d="M3.2 5.6Q7 2.2 10.8 5.6Q7 9 3.2 5.6Z" fill="#dfe8ff" stroke="#1a2050" stroke-width="0.9"/><circle cx="7" cy="5.6" r="1.9" fill="#3a60e0"/><circle cx="7" cy="5.6" r="0.7" fill="#101840"/></svg></div>
<div class="a" style="left:666px;top:221px;width:15px;height:12.2px;background:#e1e1e1;border:1px solid #c8c8c8;border-radius:1.5px;box-sizing:border-box;"><svg width="15" height="12" style="position:absolute;left:0;top:0"><rect x="2" y="0.8" width="7" height="6.5" fill="#6ab46a" stroke="#3a7a3a" stroke-width="0.5"/><path d="M3 4H7" stroke="#e8f4e8" stroke-width="1"/><path d="M3.5 2.3L6.5 5.7" stroke="#e8f4e8" stroke-width="0.6"/><path d="M5.2 9.4L7.8 5.4L10.5 9.4Z" fill="#e02020" stroke="#a01010" stroke-width="0.4"/></svg></div>
<div class="a" style="left:684.3px;top:221px;width:15px;height:12.2px;background:#e1e1e1;border:1px solid #c8c8c8;border-radius:1.5px;box-sizing:border-box;"><svg width="15" height="12" style="position:absolute;left:0;top:0"><rect x="2" y="0.8" width="7" height="6.5" fill="#6ab46a" stroke="#3a7a3a" stroke-width="0.5"/><path d="M3 4H7" stroke="#e8f4e8" stroke-width="1"/><path d="M3.5 2.3L6.5 5.7" stroke="#e8f4e8" stroke-width="0.6"/><path d="M4.8 5.2L10.8 5.2L7.8 9.2Z" fill="#e02020" stroke="#a01010" stroke-width="0.4"/></svg></div>
<div class="a" style="left:164.5px;top:241.8px;width:342px;height:184.2px;background:linear-gradient(135deg,#fbfaf6 0%,#faf7ec 60%,#f9f4e4 100%);border-top:1px solid #ababab;border-left:1px solid #ababab;border-right:1px solid #e8e8e8;border-bottom:1px solid #e8e8e8;box-sizing:border-box;"></div>
<div class="a" style="left:199.6px;top:260.9px;width:101.8px;height:146px;background:#80e8ff;"></div>
<div class="a" style="left:199.6px;top:327.4px;width:101.8px;height:12.3px;background:#fc9f62;"></div>
<svg class="a" style="left:190px;top:288px" width="8" height="12"><path d="M1.3 1L6.4 6.1L1.3 11.3Z" fill="#b8b8b8"/></svg>
<svg class="a" style="left:296px;top:260px" width="20" height="120"><path d="M11.5 3.8V113.75" stroke="#303030" stroke-width="0.8"/><path d="M11.5 3.8H15M11.5 11.9H15M11.5 19.5H15" stroke="#303030" stroke-width="0.8"/><path d="M5.3 34.4H11.5M5.3 73.6H11.5M5.3 113.75H11.5" stroke="#303030" stroke-width="0.8"/><circle cx="5.3" cy="34.4" r="1.1" fill="#404040"/><circle cx="5.3" cy="73.6" r="1.1" fill="#404040"/><circle cx="5.3" cy="113.75" r="1.1" fill="#404040"/></svg>
<div class="t" style="left:315px;top:262.00px;font-size:6.3px;color:#202020;letter-spacing:0.000px;-webkit-text-stroke:0.08px currentColor;">1: Thermally Toughened Float Glass</div>
<div class="t" style="left:315px;top:270.00px;font-size:6.3px;color:#202020;letter-spacing:0.000px;-webkit-text-stroke:0.08px currentColor;">2: PVB 22 °C loading until 10 sec</div>
<div class="t" style="left:315px;top:277.00px;font-size:6.3px;color:#202020;letter-spacing:0.000px;-webkit-text-stroke:0.08px currentColor;">3: Thermally Toughened Float Glass</div>
<div class="t" style="left:382px;width:200px;text-align:center;top:379.00px;font-size:6.3px;color:#202020;letter-spacing:0.000px;-webkit-text-stroke:0;">Local Axis z</div>
<div class="t" style="left:382px;width:200px;text-align:center;top:387.00px;font-size:6.3px;color:#202020;letter-spacing:0.000px;-webkit-text-stroke:0;">Direction</div>
<svg class="a" style="left:476px;top:394px" width="12" height="21"><path d="M4 1.6H8V13.3H10L6 19.5L2 13.3H4Z" fill="#b4b4b4"/></svg>
<div class="t" style="left:382px;width:200px;text-align:center;top:416.00px;font-size:6.3px;color:#202020;letter-spacing:0.000px;-webkit-text-stroke:0;">Bottom</div>
<svg class="a" style="left:510.4px;top:241.9px" width="191.6" height="9.3"><path d="M0 0H185.6L191.6 6V9.3H0Z" fill="#dce6f4"/></svg>
<div class="a" style="left:510.4px;top:251.20000000000002px;width:191.6px;height:84.8px;background:#eef2f9;"></div>
<div class="a" style="left:510.4px;top:251.20000000000002px;width:190.6px;height:1px;background:#f8faff;"></div>
<div class="a" style="left:510.4px;top:251.20000000000002px;width:1px;height:84.8px;background:#f6f8fc;"></div>
<div class="a" style="left:701.0px;top:247.9px;width:1px;height:88.1px;background:#cfcff5;"></div>
<div class="a" style="left:510.4px;top:335.0px;width:191.6px;height:1.2px;background:#c8c8f2;"></div>
<div class="t" style="left:511.9px;top:244.00px;font-size:6.8px;color:#2f4a6d;letter-spacing:-0.150px;">Info</div>
<div class="t" style="left:512px;top:257.00px;font-size:6.8px;color:#1e1e1e;letter-spacing:0.000px;">Layer No.: 1</div>
<div class="t" style="left:512px;top:271.00px;font-size:6.8px;color:#1e1e1e;letter-spacing:0.000px;">Surface weight:</div>
<div class="t" style="left:512px;top:291.00px;font-size:6.8px;color:#1e1e1e;letter-spacing:0.000px;">Σ Thickness:</div>
<div class="t" style="left:512px;top:305.00px;font-size:6.8px;color:#1e1e1e;letter-spacing:0.000px;">Σ Surface weight:</div>
<div class="a" style="left:574.2px;top:266.4px;width:45.7px;height:12.0px;background:#ebebeb;border:1px solid #a8a8a8;border-top-color:#8a8a8a;box-sizing:border-box;"></div>
<div class="t" style="right:142.5px;top:270.00px;font-size:6.8px;color:#1e1e1e;letter-spacing:0.120px;">0.200</div>
<div class="a" style="left:574.2px;top:287.3px;width:45.7px;height:11.300000000000011px;background:#ebebeb;border:1px solid #a8a8a8;border-top-color:#8a8a8a;box-sizing:border-box;"></div>
<div class="t" style="right:142.5px;top:290.00px;font-size:6.8px;color:#1e1e1e;letter-spacing:0.120px;">17.52</div>
<div class="a" style="left:574.2px;top:302.5px;width:45.7px;height:11.300000000000011px;background:#ebebeb;border:1px solid #a8a8a8;border-top-color:#8a8a8a;box-sizing:border-box;"></div>
<div class="t" style="right:142.5px;top:306.00px;font-size:6.8px;color:#1e1e1e;letter-spacing:0.120px;">0.416</div>
<div class="t" style="left:622.3px;top:270.00px;font-size:6.7px;color:#1e1e1e;letter-spacing:-0.120px;">[kN/m<sup style="font-size:5px;vertical-align:2px;margin-left:0.5px">2</sup>]</div>
<div class="t" style="left:622.3px;top:291.00px;font-size:6.7px;color:#1e1e1e;letter-spacing:-0.120px;">[mm]</div>
<div class="t" style="left:622.3px;top:305.00px;font-size:6.7px;color:#1e1e1e;letter-spacing:-0.120px;">[kN/m<sup style="font-size:5px;vertical-align:2px;margin-left:0.5px">2</sup>]</div>
<div class="a" style="left:510.8px;top:342.3px;width:191.2px;height:83.5px;background:#eef2f9;border-left:1px solid #dfe3f5;border-right:1px solid #cfcff5;border-bottom:1.2px solid #c8c8f2;box-sizing:border-box;"></div>
<div class="a" style="left:56px;top:439.2px;width:14.8px;height:12.3px;background:linear-gradient(#e9e9e9,#dadada);border:1px solid #c8c8c8;border-radius:1.5px;box-sizing:border-box;"><svg width="15" height="12" style="position:absolute;left:0;top:0"><path d="M3.5 7.6L2.2 10.3L6 8.6Z" fill="#fff" stroke="#707070" stroke-width="0.6"/><circle cx="6.6" cy="4.9" r="3.9" fill="#fff" stroke="#808080" stroke-width="0.7"/><path d="M3.9 9.1L5.8 7.9" stroke="#fff" stroke-width="1"/><text x="4.6" y="7.6" font-size="6.8" font-family="Liberation Sans" font-weight="bold" fill="#1c2c80">?</text></svg></div>
<div class="a" style="left:77px;top:439.2px;width:14.6px;height:12.3px;background:linear-gradient(#e9e9e9,#dadada);border:1px solid #c8c8c8;border-radius:1.5px;box-sizing:border-box;"><svg width="15" height="12" style="position:absolute;left:0;top:0"><rect x="4" y="0.8" width="7.5" height="5.8" fill="#ececec" stroke="#505050" stroke-width="0.6"/><rect x="4" y="0.8" width="7.5" height="1.4" fill="#2a3a90"/><path d="M1 6.2L4.3 2.6V4.8H8.5V7.6H4.3V9.8Z" fill="#8cb0f0" stroke="#101850" stroke-width="0.8"/></svg></div>
<div class="a" style="left:95px;top:439.2px;width:14.7px;height:12.3px;background:linear-gradient(#e9e9e9,#dadada);border:1px solid #c8c8c8;border-radius:1.5px;box-sizing:border-box;"><svg width="15" height="12" style="position:absolute;left:0;top:0"><rect x="1.5" y="0.8" width="7.5" height="5.8" fill="#ececec" stroke="#505050" stroke-width="0.6"/><rect x="1.5" y="0.8" width="7.5" height="1.4" fill="#2a3a90"/><path d="M11.8 6.2L8.5 2.6V4.8H4.3V7.6H8.5V9.8Z" fill="#8cb0f0" stroke="#101850" stroke-width="0.8"/></svg></div>
<div class="a" style="left:160px;top:439.2px;width:48.69999999999999px;height:12.3px;background:#e1e1e1;border:1px solid #adadad;box-sizing:border-box;"></div>
<div class="t" style="left:84.35px;width:200px;text-align:center;top:443.00px;font-size:6.8px;color:#1a1a1a;letter-spacing:-0.150px;"><u>C</u>alculation</div>
<div class="a" style="left:214.4px;top:439.2px;width:49.29999999999998px;height:12.3px;background:#e1e1e1;border:1px solid #adadad;box-sizing:border-box;"></div>
<div class="t" style="left:139.05px;width:200px;text-align:center;top:443.00px;font-size:6.8px;color:#1a1a1a;letter-spacing:-0.150px;">Details...</div>
<div class="a" style="left:268.9px;top:439.2px;width:49.30000000000001px;height:12.3px;background:#e1e1e1;border:1px solid #adadad;box-sizing:border-box;"></div>
<div class="t" style="left:193.54999999999995px;width:200px;text-align:center;top:443.00px;font-size:6.8px;color:#1a1a1a;letter-spacing:-0.150px;"><u>S</u>tandard</div>
<div class="a" style="left:378.3px;top:439.2px;width:49.30000000000001px;height:12.3px;background:#e1e1e1;border:1px solid #adadad;box-sizing:border-box;"></div>
<div class="t" style="left:302.95000000000005px;width:200px;text-align:center;top:443.00px;font-size:6.8px;color:#1a1a1a;letter-spacing:-0.150px;"><u>G</u>raphics</div>
<div class="a" style="left:608.2px;top:439.2px;width:44.39999999999998px;height:12.3px;background:#e1e1e1;border:1px solid #adadad;box-sizing:border-box;"></div>
<div class="t" style="left:530.4000000000001px;width:200px;text-align:center;top:443.00px;font-size:6.8px;color:#1a1a1a;letter-spacing:-0.150px;">OK</div>
<div class="a" style="left:658.1px;top:439.2px;width:44.19999999999993px;height:12.3px;background:#e1e1e1;border:1px solid #adadad;box-sizing:border-box;"></div>
<div class="t" style="left:580.2px;width:200px;text-align:center;top:443.00px;font-size:6.8px;color:#1a1a1a;letter-spacing:-0.150px;">Cancel</div>
<div class="a" style="left:51px;top:456px;width:656px;height:1px;background:#d0d0d0;"></div>
<div class="a" style="left:51px;top:457px;width:656px;height:1px;background:#fafafa;"></div>
<div class="a" style="left:50px;top:469px;width:659px;height:1px;background:#b4b4b4;"></div>
<div class="t" style="left:52px;top:460.00px;font-size:6.8px;color:#1a1a1a;letter-spacing:-0.150px;">Thermally Toughened</div>
</body></html>
